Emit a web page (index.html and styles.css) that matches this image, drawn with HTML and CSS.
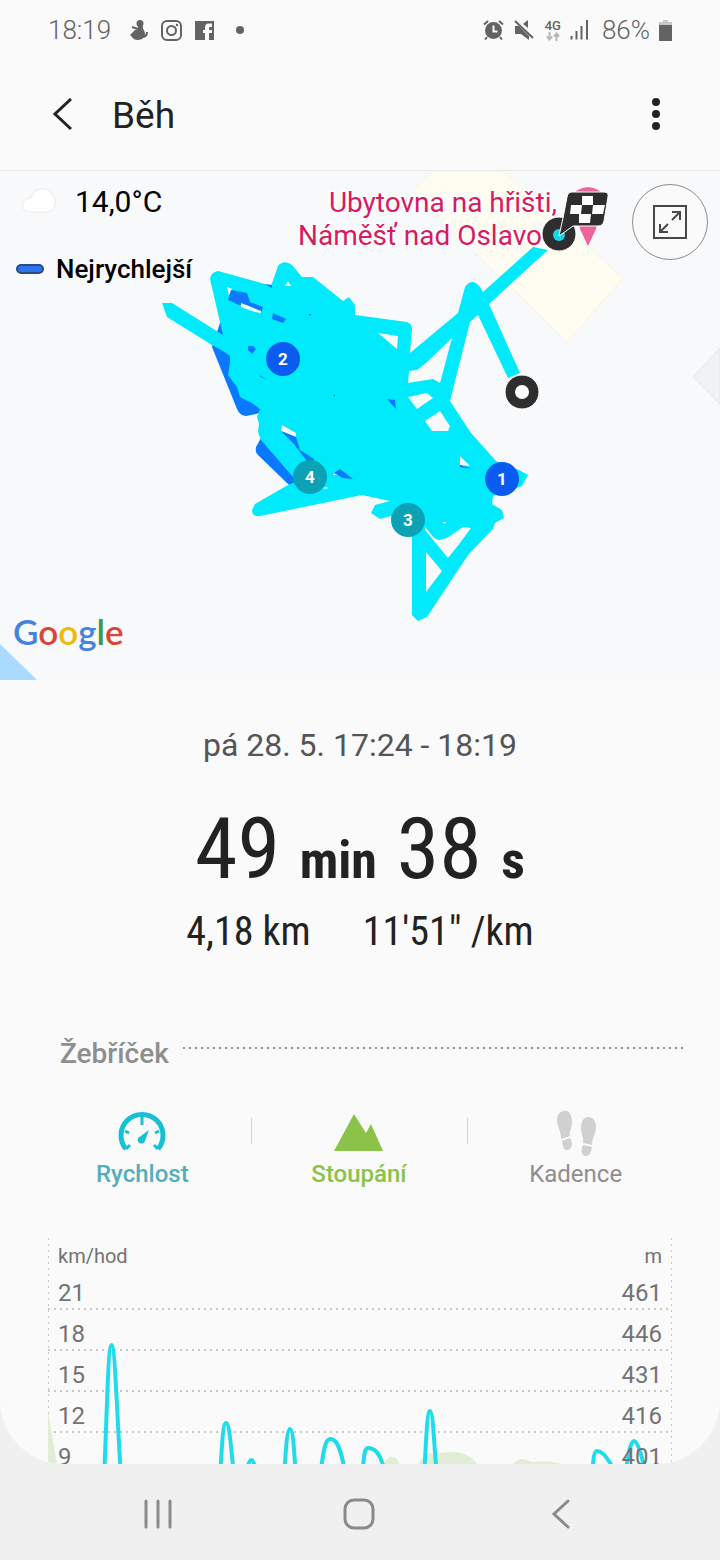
FILE: index.html
```html
<!DOCTYPE html>
<html lang="cs">
  <head>
    <meta charset="UTF-8" />
    <meta name="viewport" content="width=device-width, initial-scale=1" />
    <title>Běh</title>
    <link rel="stylesheet" href="styles.css">
  </head>
  <body>
    <div class="screen">
      <!-- Status bar -->
      <div class="status">
        <span class="clock">18:19</span>
        <svg class="person" width="18" height="20" viewBox="0 0 18 20">
          <circle cx="10" cy="3.500" r="3.500" />
          <path d="M8 6h5c-1 3 2 4 2 8 0 3-3 6-7 6-3 0-5-1-6-3l-2-2 5-5 3-1z" />
          <path class="line" d="M2 7l6 2M12 17c4 0 5-2 5-5" />
        </svg>
        <svg class="insta" width="21" height="21" viewBox="0 0 21 21">
          <rect x="1" y="1" width="19" height="19" rx="5" />
          <circle cx="10.500" cy="10.500" r="4.500" />
          <circle class="dot" cx="16" cy="5" r="1.200" />
        </svg>
        <svg class="fb" width="19" height="19" viewBox="0 0 19 19">
          <path d="M0 0h19v19h-5v-7h3v-3h-3V7q0-1 1-1h2V2.500h-3c-3 0-4 1.500-4 4V9H8v3h2v7H0z" />
        </svg>
        <svg class="more-dot" width="8" height="8" viewBox="0 0 8 8"><circle cx="4" cy="4" r="4" /></svg>

        <div class="status-right">
          <svg width="22" height="20" viewBox="0 0 22 20">
            <circle cx="10.500" cy="10.500" r="8.500" />
            <path class="line" d="M1 4.500L5 1M16 1l4 3.500M4 17l-2 2.500M17 17l2 2.500" />
            <path class="hand" d="M10.500 5.500v6h4" />
          </svg>
          <svg class="mute" width="20" height="20" viewBox="0 0 20 20">
            <path d="M1 6h4l10 10v4l-8-6H1zM14 0v8l-5-4z" />
            <path class="line" d="M1 1l18 17" />
          </svg>
          <div class="network">
            <span>4G</span>
            <svg width="14" height="9" viewBox="0 0 14 9">
              <path d="M3.500 0v7M1 4.500l2.500 3 2.500-3M10.500 9V2M8 4.500l2.500-3 2.500 3" />
            </svg>
          </div>
          <svg class="signal" width="19" height="20" viewBox="0 0 19 20">
            <path d="M1.500 16v3.500M6.500 11v8.500M11.500 6v13.500M17 0v19.500" />
          </svg>
          <span class="percent">86%</span>
          <svg width="13" height="21" viewBox="0 0 13 21">
            <path class="light" d="M4 0h5v2h4v4H0V2h4z" />
            <path d="M0 5h13v16H0z" />
          </svg>
        </div>
      </div>

      <!-- Title -->
      <header class="topbar">
        <button class="icon-btn" aria-label="Zpět">
          <svg width="24" height="34" viewBox="0 0 24 34"><path d="M23 1L7 16l16 15" /></svg>
        </button>
        <h1>Běh</h1>
        <button class="icon-btn menu" aria-label="Další možnosti">
          <svg width="10" height="34" viewBox="0 0 10 34">
            <circle cx="5" cy="4" r="4" /><circle cx="5" cy="16" r="4" /><circle cx="5" cy="28" r="4" />
          </svg>
        </button>
      </header>

      <main class="content">
        <!-- Map -->
        <section class="map">
          <svg class="map-canvas" viewBox="0 171 720 509" preserveAspectRatio="xMidYMin slice">
            <path class="building" d="M433 171L413 192 567 342 623 278 502 171z" />
            <path class="block" d="M720 348l-27 29 27 27z" />
            <path class="water" d="M0 644l37 36H0z" />

            <text class="place" text-anchor="end" x="557" y="212">Ubytovna na hřišti,</text>
            <text class="place" text-anchor="end" x="542" y="245">Náměšť nad Oslavo</text>

            <!-- Fastest part of the run, under the main track -->
            <g class="fast">
              <path d="M221 320L212 347 237 409Q240 416 246 416L256 414 262 412 290 400 250 330z" />
              <path d="M261 438L256 447Q255 452 258 455L288 484 300 494 316 491 310 460z" />
            </g>
            <path class="track" d="M210 279Q211 272 218 271L265 284 271 286 278 266Q284 259 292 265L302 277H313L343 301 349 297 355 305V315L407 322Q412 324 412 329L410 353 458 313 465 287Q472 277 480 287L483 292 533 247 548 250 489 304 520 373 508 378 478 315 470 322 450 401 471 433 496 461 519 470 528 475 522 486 493 496 492 504 502 510 504 518 495 523 493 529 468 555 427 617 418 621 412 615V537L391 516 380 519 371 513 375 505 390 501 362 495 260 516Q252 517 252 510L255 504 288 485 300 480 293 477 261 440 258 432 259 424 257 417 260 409 252 403 240 397 237 387 228 375 230 363 230 356 223 351 212 345 167 317 162 303H172L223 335 220 322z" />
            <g class="gap">
              <path d="M227 287l5 2-3 7zM285 286l3-5 3 5zM378 333l20 3-1 13zM409 371l8-1 9-7 26-25-12 45-7-4-25 4zM408 397l19-4 6 5-16 11z" />
              <path d="M425 421l15-10 10 15-2 5h-16zM460 456l10 10-10-1zM425 527c6 6 8 13 15 13l7-2 16-11 8 1-11 15-12 15-23-28zM426 552l16 19-16 21zM442 522l4 0-1 2z" />
              <path d="M282 425l14 8v4l-15-6zM334 473l6 2-7 0zM325 487l4 1-6 1z" />
            </g>
            <g class="fast">
              <path d="M231 290l16 3 3 9 13 5-2 6-14-8-8 0-11-5zM273 313l13 6-3 4-11-4zM265 284l7 1v3zM248 346l5 0 3 3-4 5-4-4zM259 375l9 5-7-3z" />
              <path d="M281 431l15 6 4 13 14 9v4l-7-2-14-18zM334 473l6-4 13 10-10-1zM387 399l8 1 1 9zM460 465l13 4-13-2zM308 314l3 0v2zM333 395l2 0v2z" />
            </g>
            <path class="gap" d="M241 303l20 8v2l-6-1-14-5z" />

            <!-- Lap markers -->
            <g class="laps">
              <circle class="lap" cx="283" cy="359" r="17" /><text x="283" y="365">2</text>
              <circle class="lap" cx="502" cy="479" r="17" /><text x="502" y="485">1</text>
              <circle class="lap done" cx="310" cy="477" r="17" /><text x="310" y="483">4</text>
              <circle class="lap done" cx="408" cy="520" r="17" /><text x="408" y="526">3</text>
            </g>

            <!-- Start and finish -->
            <circle class="ring" cx="522" cy="392" r="17" /><circle class="ring-hole" cx="522" cy="392" r="7" />
            <path class="pin" d="M588 246l-8-17-7-35c8-9 22-9 30 0l-7 35z" />
            <circle class="ring" cx="559" cy="234" r="17" /><circle class="ring-cyan" cx="559" cy="235" r="6" />
            <path class="flag" d="M572 192h32q5 0 4 5l-4 24q-1 5-6 5h-25l-14 10 4-18 4-21q1-5 5-5z" />
            <path class="squares" d="M582 196h11v9h-11zM571 205h11l-1 9h-11zM593 205h12l-2 9h-11zM579 214h12l-1 9h-11z" />
          </svg>

          <div class="weather">
            <svg width="36" height="26" viewBox="0 0 36 26">
              <path d="M9 24c-10 0-10-14 1-14C12-1 28-2 31 7c5 3 5 16-4 17z" />
            </svg>
            <span>14,0°C</span>
          </div>
          <div class="legend"><i class="swatch"></i><span>Nejrychlejší</span></div>
          <button class="expand" aria-label="Zvětšit mapu">
            <svg width="34" height="34" viewBox="0 0 34 34">
              <path d="M1 1h32v32H1zM19 15l8-8M19 7h8v8M15 19l-8 8M7 19v8h8" />
            </svg>
          </button>
          <div class="google"><span class="b">G</span><span class="r">o</span><span class="y">o</span><span class="b">g</span><span class="g">l</span><span class="r">e</span></div>
        </section>

        <!-- Workout summary -->
        <section class="summary">
          <p class="date">pá 28. 5. 17:24 - 18:19</p>
          <p class="duration">49 <b>min</b> 38 <b>s</b></p>
          <p class="stats"><span>4,18 km</span><span>11'51" /km</span></p>
        </section>

        <!-- Chart -->
        <section class="ranking">
          <h2>Žebříček</h2>
          <div class="tabs">
            <button class="tab speed">
              <svg width="48" height="42" viewBox="0 0 48 42">
                <path class="arc" d="M8 39a21 21 0 1 1 32 0" />
                <path class="ticks" d="M24 6v9M7 21l4 2M41 21l-4 2M8 39l4-4M40 39l-4-4" />
                <path d="M31 20l-4 11c-2 5-9 2-7-3z" />
              </svg>
              Rychlost
            </button>
            <button class="tab climb">
              <svg width="50" height="42" viewBox="0 0 50 42"><path d="M0 41L20 4l12 19 5-9 12 27z" /></svg>
              Stoupání
            </button>
            <button class="tab cadence">
              <svg width="40" height="46" viewBox="0 0 40 46">
                <path d="M8 1c5-1 8 4 8 11 0 6-3 9-2 14l-9 3C5 20 1 17 1 10c0-5 3-9 7-9zM6 31l8-3c4 7 1 12-3 12s-4-4-5-9zM32 7c5 0 8 4 8 10 0 7-4 10-4 18l-9-2c1-5-2-9-2-15 0-7 3-11 7-11zM27 35l9 2c-1 5-2 9-6 9s-6-5-3-11z" />
              </svg>
              Kadence
            </button>
          </div>

          <div class="chart">
            <svg class="plot" viewBox="0 0 624 240" preserveAspectRatio="none">
              <path class="hill" d="M0 173l9 54v13H0zM335 227c6-11 12-11 17 0zM369 227l10-12 10 1c16-5 32-2 41 11zM464 227c8-9 12-6 20-3 16-2 24 0 33 3z" />
              <path class="line" d="M56 240C59 177 60 107 63.500 107S69 177 73 240" />
              <path class="line" d="M172 240C174 206 175 185 178 185S183 206 186 240" />
              <path class="line" d="M197 240q6-36 13 0" />
              <path class="line" d="M236 240C238 210 239 191 242 191S246 210 248 240" />
              <path class="line" d="M272 240C275 214 277 201 282 201C290 200 294 215 298 240" />
              <path class="line" d="M314 240C316 219 316 210 320 210C329 210 334 219 338 240" />
              <path class="line" d="M376 240C378 206 379 173 382 173S386 206 389 240" />
              <path class="line" d="M544 240C545 222 546 213 549 213C554 213 560 220 566 232" />
              <path class="line" d="M577 240C580 214 583 203 586 203S593 214 597 232M604 232q4-10 8-2" />
            </svg>
            <div class="row units"><span>km/hod</span><span>m</span></div>
            <div class="row"><span>21</span><span>461</span></div>
            <div class="row"><span>18</span><span>446</span></div>
            <div class="row"><span>15</span><span>431</span></div>
            <div class="row"><span>12</span><span>416</span></div>
            <div class="row"><span>9</span><span>401</span></div>
          </div>
        </section>
      </main>
    </div>

    <!-- System navigation -->
    <nav class="navbar">
      <button aria-label="Poslední aplikace">
        <svg width="34" height="34" viewBox="0 0 34 34"><path d="M5 4v26M17 4v26M29 4v26" /></svg>
      </button>
      <button aria-label="Domů">
        <svg width="34" height="34" viewBox="0 0 34 34"><rect x="2" y="3" width="28" height="28" rx="9" /></svg>
      </button>
      <button aria-label="Zpět">
        <svg width="34" height="34" viewBox="0 0 34 34"><path d="M23 4L9 17l14 13" /></svg>
      </button>
    </nav>
  </body>
</html>
```
FILE: styles.css
```css
* {
  box-sizing: border-box;
}
body {
  margin: 0;
  height: 100vh;
  display: flex;
  flex-direction: column;
  background-color: #f0f0f0;
  color: #222;
  font-family: Roboto, "Liberation Sans", sans-serif;
}
h1, h2, p {
  margin: 0;
  font-weight: 400;
}
button {
  padding: 0;
  border: none;
  background: none;
  font-family: inherit;
  cursor: pointer;
}
svg {
  display: block;
}
.screen {
  flex: 1;
  min-height: 0;
  overflow: hidden;
  display: flex;
  flex-direction: column;
  background-color: #fafafa;
  border-radius: 0 0 64px 64px;
}

/* status bar */
.status {
  flex: none;
  height: 60px;
  padding: 0 48px;
  display: flex;
  align-items: center;
  color: #636363;
  fill: #636363;
  font-size: 26px;
  font-weight: 300;
}
.person {
  margin-left: 19px;
}
.insta {
  margin-left: 13px;
  fill: none;
  stroke: #636363;
  stroke-width: 2;
}
.insta .dot {
  fill: #636363;
  stroke: none;
}
.fb {
  margin-left: 13px;
}
.more-dot {
  margin-left: 22px;
}
.status-right {
  margin-left: auto;
  display: flex;
  align-items: center;
  gap: 9px;
}
.status .line {
  fill: none;
  stroke: #636363;
  stroke-width: 2;
}
.status .hand {
  fill: none;
  stroke: #fafafa;
  stroke-width: 2;
}
.status .light {
  fill: #c8c8c8;
}
.network {
  margin-left: 2px;
  display: flex;
  flex-direction: column;
  align-items: center;
  font-size: 13px;
  font-weight: 500;
  line-height: 13px;
}
.network svg, .signal {
  fill: none;
  stroke: #b8b8b8;
  stroke-width: 2;
}
.signal {
  stroke: #636363;
}
.percent {
  margin-left: 4px;
}

/* title bar */
.topbar {
  flex: none;
  height: 111px;
  padding: 0 48px;
  display: flex;
  align-items: center;
  border-bottom: 1px solid #e8e8e8;
}
.topbar h1 {
  margin-left: 40px;
  font-size: 37px;
}
.icon-btn svg {
  fill: none;
  stroke: #222;
  stroke-width: 3;
}
.menu {
  margin-left: auto;
  padding-right: 11px;
}
.menu svg {
  fill: #222;
  stroke: none;
}

/* map */
.map {
  position: relative;
  height: 509px;
  padding: 8px 16px;
  background-color: #f8f9fb;
  color: #000;
}
.map-canvas {
  position: absolute;
  top: 0;
  left: 0;
  width: 100%;
  height: 100%;
}
.building {
  fill: #fffcf1;
  stroke: #fbf3df;
}
.block {
  fill: #f1f2f4;
  stroke: #e6e7e9;
}
.water {
  fill: #aadaff;
}
.place {
  fill: #d81b60;
  stroke: #fff;
  stroke-width: 3;
  paint-order: stroke;
  font-size: 28px;
}
.track {
  fill: #00eafc;
}
.fast {
  fill: #0a78ff;
}
.gap {
  fill: #f8f9fb;
}
.lap {
  fill: #0a5cf0;
}
.lap.done {
  fill: #0aa2b4;
}
.laps text {
  fill: #fff;
  font-size: 17px;
  font-weight: 700;
  text-anchor: middle;
}
.ring, .flag {
  fill: #2e2e2e;
  stroke: #fff;
}
.ring-hole, .squares {
  fill: #fff;
}
.ring-cyan {
  fill: #16d7ea;
}
.pin {
  fill: #f0629a;
}
.weather, .legend {
  position: relative;
  display: flex;
  align-items: center;
}
.weather {
  gap: 18px;
  padding-left: 5px;
  height: 44px;
  font-size: 30px;
}
.weather svg {
  fill: #fff;
  stroke: #e9e9e9;
}
.legend {
  gap: 12px;
  margin-top: 29px;
  font-size: 26px;
  font-weight: 500;
  line-height: 34px;
}
.swatch {
  width: 28px;
  height: 10px;
  border: 2px solid #2d4a86;
  border-radius: 5px;
  background-color: #2b74ee;
}
.expand {
  position: absolute;
  top: 13px;
  right: 12px;
  width: 76px;
  height: 76px;
  display: flex;
  align-items: center;
  justify-content: center;
  border: 1px solid #8c8c8c;
  border-radius: 50%;
  background-color: #fafafa;
}
.expand svg {
  fill: none;
  stroke: #484848;
  stroke-width: 2;
}
.google {
  position: absolute;
  left: 13px;
  bottom: 27px;
  font-family: Lato, sans-serif;
  font-size: 35px;
  font-weight: 600;
  line-height: 44px;
}
.google .b { color: #4683e0; }
.google .r { color: #db4437; }
.google .y { color: #f0b90c; }
.google .g { color: #349c52; }

/* summary */
.summary {
  padding-top: 46px;
  text-align: center;
}
.date {
  color: #555;
  font-size: 32px;
  line-height: 38px;
}
.duration {
  margin-top: 42px;
  font-family: "Roboto Condensed", Roboto, sans-serif;
  font-size: 86px;
  line-height: 86px;
}
.duration b {
  font-size: 52px;
}
.stats {
  display: flex;
  justify-content: center;
  gap: 52px;
  margin-top: 4px;
  font-family: "Roboto Condensed", Roboto, sans-serif;
  font-size: 40px;
  line-height: 48px;
}

/* ranking */
.ranking {
  padding-top: 82px;
}
.ranking h2 {
  display: flex;
  gap: 14px;
  padding: 0 36px 0 60px;
  color: #8e8e8e;
  font-size: 28px;
  font-weight: 500;
  line-height: 32px;
}
.ranking h2::after {
  content: "";
  flex: 1;
  height: 2px;
  margin-top: 9px;
  background: repeating-linear-gradient(90deg, #909090 0 2px, transparent 2px 6px);
}
.tabs {
  display: grid;
  grid-template-columns: repeat(3, 1fr);
  margin: 34px 36px 0 34px;
}
.tab {
  position: relative;
  height: 84px;
  display: flex;
  flex-direction: column;
  align-items: center;
  justify-content: flex-end;
  gap: 8px;
  font-size: 24px;
  font-weight: 500;
  line-height: 28px;
}
.tab + .tab::before {
  content: "";
  position: absolute;
  left: 0;
  top: 14px;
  width: 1px;
  height: 26px;
  background-color: #d5d5d5;
}
.speed {
  color: #55aebb;
}
.speed svg {
  fill: #19c0d4;
}
.speed .arc, .speed .ticks {
  fill: none;
  stroke: #19c0d4;
  stroke-width: 5;
}
.speed .ticks {
  stroke-width: 3;
}
.climb {
  color: #8bc34a;
  fill: #8bc34a;
}
.cadence {
  gap: 4px;
  color: #8e8e8e;
  fill: #d0d0d0;
  font-weight: 400;
}

/* chart */
.chart {
  position: relative;
  margin: 50px 48px 0;
  background:
    repeating-linear-gradient(#c8c8c8 0 2px, transparent 2px 6px) left / 1px 100% no-repeat,
    repeating-linear-gradient(#c8c8c8 0 2px, transparent 2px 6px) right / 1px 100% no-repeat;
}
.plot {
  position: absolute;
  top: 0;
  left: 0;
  width: 100%;
  height: 240px;
}
.plot .hill {
  fill: #e1eed5;
}
.plot .line {
  fill: none;
  stroke: #1fdcec;
  stroke-width: 4;
}
.row {
  height: 41px;
  padding: 8px 10px 0;
  display: flex;
  justify-content: space-between;
  color: #737373;
  font-size: 24px;
  line-height: 33px;
  background: repeating-linear-gradient(90deg, #c8c8c8 0 2px, transparent 2px 6px) bottom / 100% 2px no-repeat;
}
/* keeps the labels above the plot */
.row span {
  position: relative;
}
.units {
  height: 31px;
  padding-top: 0;
  font-size: 20px;
  line-height: 36px;
  background: none;
}

/* bottom navigation */
.navbar {
  flex: none;
  height: 96px;
  padding: 4px 57px 0;
  display: grid;
  grid-template-columns: repeat(3, 1fr);
}
.navbar button {
  display: flex;
  align-items: center;
  justify-content: center;
}
.navbar svg {
  fill: none;
  stroke: #8a8a8a;
  stroke-width: 3;
  stroke-linecap: round;
}
```
